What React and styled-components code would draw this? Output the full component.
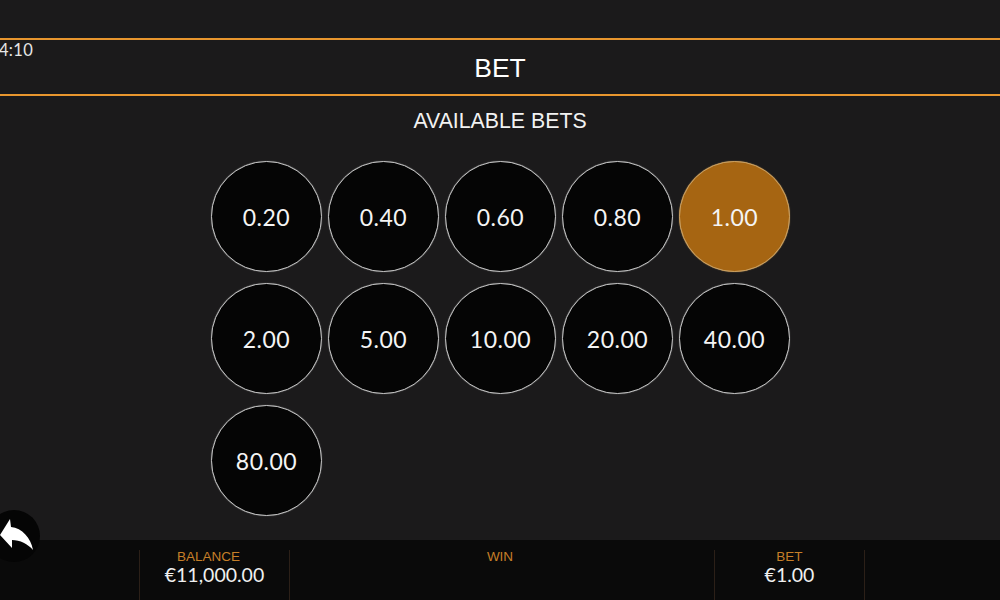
import React from 'react';
import styled, { createGlobalStyle } from 'styled-components';

const Global = createGlobalStyle`
  html, body {
    margin: 0;
    padding: 0;
    background: #1b1a1b;
    overflow: hidden;
  }
  body {
    font-family: "Liberation Sans", Arial, sans-serif;
  }
`;

const Page = styled.div`
  position: relative;
  width: 1000px;
  height: 600px;
  display: flex;
  flex-direction: column;
  background: #1b1a1b;
  color: #fff;
  overflow: hidden;
`;

const Clock = styled.div`
  position: absolute;
  left: -1px;
  top: 41px;
  font-family: Lato, sans-serif;
  font-size: 16.5px;
  letter-spacing: 0.3px;
  line-height: 18px;
  color: #e6e6e6;
`;

const Header = styled.div`
  margin-top: 38px;
  height: 52px;
  padding-top: 2px;
  display: flex;
  align-items: center;
  justify-content: center;
  border-top: 2px solid #e8962e;
  border-bottom: 2px solid #e8962e;
  font-size: 26.5px;
`;

const Subtitle = styled.div`
  margin-top: 12px;
  height: 26px;
  line-height: 26px;
  text-align: center;
  font-size: 21.3px;
  color: #f2f2f2;
`;

const Grid = styled.div`
  flex: 1;
  margin-top: 27px;
  display: grid;
  grid-template-columns: repeat(5, 111px);
  grid-auto-rows: 111px;
  column-gap: 6px;
  row-gap: 11px;
  justify-content: center;
  align-content: start;
  padding-left: 1px;
`;

const Chip = styled.div`
  box-sizing: border-box;
  padding-top: 1px;
  border-radius: 50%;
  border: 1px solid ${(p) => (p.$active ? '#c9a063' : '#c4c4c4')};
  box-shadow: 0 0 1px ${(p) => (p.$active ? '#c9a063' : '#8a8a8a')};
  background: ${(p) => (p.$active ? '#a66512' : '#050505')};
  display: flex;
  align-items: center;
  justify-content: center;
  font-family: Lato, sans-serif;
  font-size: 23px;
  letter-spacing: 0.5px;
  color: #f4f4f4;
`;

const Footer = styled.div`
  height: 60px;
  display: grid;
  grid-template-columns: 139px 151px 1fr 151px 135px;
  background: #0a0a0a;
`;

const Cell = styled.div`
  margin-top: 10px;
  display: flex;
  flex-direction: column;
  align-items: center;
  padding-right: ${(p) => p.$trim || 0}px;
  border-left: ${(p) => (p.$split ? '1px solid #2c2018' : 'none')};
  border-right: ${(p) => (p.$split ? '1px solid #2c2018' : 'none')};
`;

const Label = styled.div`
  font-size: 13.5px;
  line-height: 15px;
  margin-top: -1px;
  margin-right: ${(p) => p.$nudge || 0}px;
  color: #c67f28;
`;

const Value = styled.div`
  font-family: Lato, sans-serif;
  font-size: 19.5px;
  line-height: 22px;
  color: #f0f0f0;
`;

const BackButton = styled.div`
  position: absolute;
  left: -12px;
  top: 510px;
  width: 52px;
  height: 52px;
  border-radius: 50%;
  background: #050505;
  display: flex;
  align-items: center;
  justify-content: center;
`;

const BackIcon = styled.svg`
  width: 34px;
  height: 36px;
  margin-left: 6px;
`;

const bets = ['0.20', '0.40', '0.60', '0.80', '1.00', '2.00', '5.00', '10.00', '20.00', '40.00', '80.00'];

const App = () => {
  return (
    <Page>
      <Global />
      <Clock>4:10</Clock>
      <Header>BET</Header>
      <Subtitle>AVAILABLE BETS</Subtitle>
      <Grid>
        {bets.map((b) => (
          <Chip key={b} $active={b === '1.00'}>{b}</Chip>
        ))}
      </Grid>
      <Footer>
        <div />
        <Cell $split>
          <Label $nudge={12}>BALANCE</Label>
          <Value>€11,000.00</Value>
        </Cell>
        <Cell $trim={4}>
          <Label>WIN</Label>
        </Cell>
        <Cell $split>
          <Label>BET</Label>
          <Value>€1.00</Value>
        </Cell>
        <div />
      </Footer>
      <BackButton>
        <BackIcon viewBox="0 0 34 36">
          <path d="M0 17 L10 1 L11 9 C22 10 31 20 33 32 C28 26 20 22 12 22 L12 30 Z" fill="#fff" />
        </BackIcon>
      </BackButton>
    </Page>
  );
};

export default App;
